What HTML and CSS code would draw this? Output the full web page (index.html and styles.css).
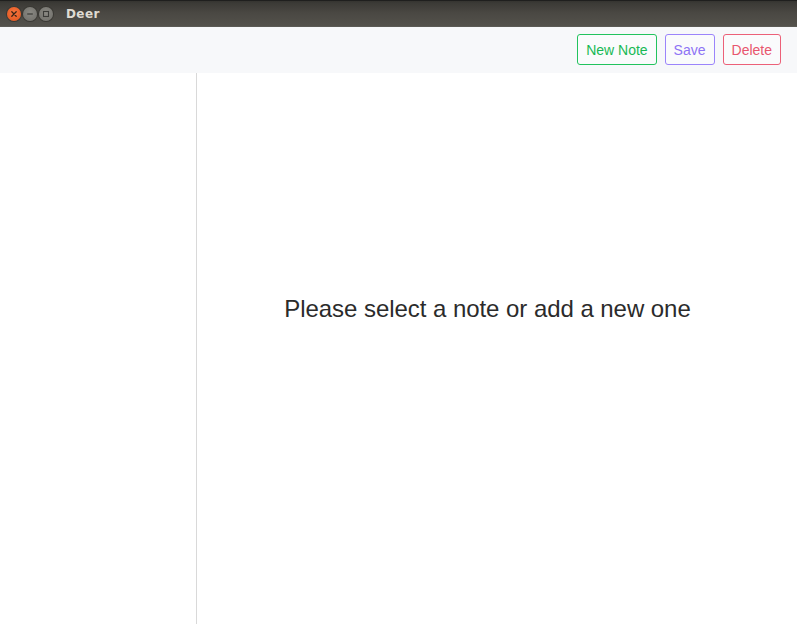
FILE: index.html
```html
<!DOCTYPE html>
<html>
<head>
<meta charset="utf-8">
<link rel="stylesheet" href="styles.css">
</head>
<body>
<div class="window">
  <div class="titlebar">
    <div class="controls">
      <span class="ctl close">
        <svg width="14" height="14" viewBox="0 0 14 14"><path d="M4.8 4.8 L9.2 9.2 M9.2 4.8 L4.8 9.2" stroke="#3a2416" stroke-width="1.3" stroke-linecap="round"/></svg>
      </span>
      <span class="ctl">
        <svg width="14" height="14" viewBox="0 0 14 14"><path d="M4.2 7 H9.8" stroke="#3b3b38" stroke-width="1.2"/></svg>
      </span>
      <span class="ctl">
        <svg width="14" height="14" viewBox="0 0 14 14"><rect x="4.5" y="4.5" width="5" height="5" fill="none" stroke="#3b3b38" stroke-width="1.1"/></svg>
      </span>
    </div>
    <span class="title">Deer</span>
  </div>
  <div class="toolbar">
    <button class="btn green">New Note</button>
    <button class="btn purple">Save</button>
    <button class="btn red">Delete</button>
  </div>
  <div class="content">
    <aside class="sidebar"></aside>
    <main class="main">
      <p class="empty">Please select a note or add a new one</p>
    </main>
  </div>
</div>
</body>
</html>
```
FILE: styles.css
```css
html, body {
  margin: 0;
  padding: 0;
  height: 100%;
  background: #ffffff;
}
.window {
  display: flex;
  flex-direction: column;
  height: 624px;
  width: 797px;
  overflow: hidden;
}
.titlebar {
  height: 27px;
  flex: none;
  display: flex;
  align-items: center;
  background: linear-gradient(#353430 0px, #3b3a36 2px, #4a4843 12px, #54524c 26px);
  border-top: 1px solid #1f1f1e;
  box-sizing: border-box;
  border-bottom: 1px solid #5b5a55;
}
.controls {
  display: flex;
  gap: 2px;
  padding-left: 7px;
}
.ctl {
  width: 14px;
  height: 14px;
  border-radius: 50%;
  background: radial-gradient(circle at 50% 40%, #8a8983, #6e6d68);
  box-shadow: 0 0 0 1px #3a3934;
  display: flex;
}
.ctl.close {
  background: radial-gradient(circle at 50% 40%, #f7753f, #e0531c);
}
.title {
  margin-left: 13px;
  font-family: "DejaVu Sans", sans-serif;
  font-weight: bold;
  font-size: 12px;
  color: #dfdbd2;
  letter-spacing: 0.4px;
}
.toolbar {
  height: 46px;
  flex: none;
  display: flex;
  align-items: center;
  justify-content: flex-end;
  gap: 8px;
  padding: 0 16px 0 0;
  background: #f7f8fa;
  box-sizing: border-box;
}
.btn {
  height: 31px;
  padding: 0 8px;
  font-family: "Liberation Sans", Arial, sans-serif;
  font-size: 14px;
  background: #fafbfc;
  border: 1px solid;
  border-radius: 3px;
  margin-bottom: 1px;
}
.btn.green { color: #18b955; border-color: #22c35e; }
.btn.purple { color: #8d73f5; border-color: #9b84fb; }
.btn.red { color: #e8566e; border-color: #ec6078; }
.content {
  flex: 1;
  display: flex;
}
.sidebar {
  width: 196px;
  flex: none;
  border-right: 1px solid #d9d9d9;
}
.main {
  flex: 1;
  display: flex;
  justify-content: center;
  padding-right: 19px;
}
.empty {
  margin: 222px 0 0 0;
  font-family: "Liberation Sans", Arial, sans-serif;
  font-size: 24px;
  letter-spacing: -0.05px;
  color: #2b2b2b;
}
```
